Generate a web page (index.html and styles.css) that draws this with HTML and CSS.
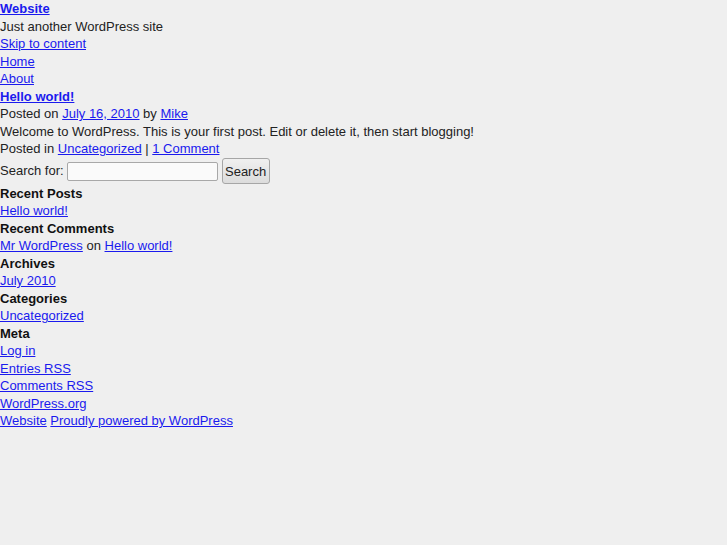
FILE: index.html
```html
<!DOCTYPE html>
<html lang="en">
<head>
    <meta charset="UTF-8">
    <title>Website | Just another WordPress site</title>
    <link rel="stylesheet" href="styles.css">
</head>
<body>
    <div id="wrapper">
        <div id="header">
            <h1 class="site-title"><a href="#">Website</a></h1>
            <div class="site-description">Just another WordPress site</div>
            <div class="skip-link"><a href="#content">Skip to content</a></div>
            <ul class="menu">
                <li><a href="#">Home</a></li>
                <li><a href="#">About</a></li>
            </ul>
        </div>

        <div id="content">
            <div class="post">
                <h2 class="entry-title"><a href="#">Hello world!</a></h2>
                <div class="entry-meta">Posted on <a href="#">July 16, 2010</a> by <a href="#">Mike</a></div>
                <div class="entry-content">Welcome to WordPress. This is your first post. Edit or delete it, then start blogging!</div>
                <div class="entry-utility">Posted in <a href="#">Uncategorized</a> | <a href="#">1 Comment</a></div>
            </div>
        </div>

        <div id="sidebar">
            <form class="searchform">
                <label for="s">Search for:</label>
                <input type="text" id="s">
                <button type="button">Search</button>
            </form>

            <h3 class="widget-title">Recent Posts</h3>
            <ul>
                <li><a href="#">Hello world!</a></li>
            </ul>

            <h3 class="widget-title">Recent Comments</h3>
            <ul>
                <li><a href="#">Mr WordPress</a> on <a href="#">Hello world!</a></li>
            </ul>

            <h3 class="widget-title">Archives</h3>
            <ul>
                <li><a href="#">July 2010</a></li>
            </ul>

            <h3 class="widget-title">Categories</h3>
            <ul>
                <li><a href="#">Uncategorized</a></li>
            </ul>

            <h3 class="widget-title">Meta</h3>
            <ul>
                <li><a href="#">Log in</a></li>
                <li><a href="#">Entries RSS</a></li>
                <li><a href="#">Comments RSS</a></li>
                <li><a href="#">WordPress.org</a></li>
            </ul>
        </div>

        <div id="footer">
            <a href="#">Website</a> <a href="#">Proudly powered by WordPress</a>
        </div>
    </div>
</body>
</html>
```

FILE: styles.css
```css
html, body, div, h1, h2, h3, ul, li, form, label {
    margin: 0;
    padding: 0;
    font-size: 100%;
    font-weight: normal;
}

body {
    font-family: 'Liberation Sans', Arial, sans-serif;
    font-size: 13px;
    line-height: 17.5px;
    background: #efefef;
    color: #222;
}

a {
    color: #1a1aee;
}

ul {
    list-style: none;
}

h1, h2, h3 {
    font-weight: bold;
}

h3 {
    color: #111;
}

.searchform {
    display: flex;
    align-items: center;
    height: 27px;
}

.searchform input {
    width: 145px;
    height: 15px;
    margin-left: 3px;
    padding: 1px 2px;
    border: 1px solid #a8a8a8;
    border-radius: 2px;
    background: #fafafa;
    font: inherit;
}

.searchform button {
    width: 48px;
    height: 26px;
    margin-left: 4px;
    padding: 0;
    border: 1px solid #a6a6a6;
    border-radius: 3px;
    background: linear-gradient(#f0f0f0, #dcdcdc);
    color: #222;
    font-family: 'Liberation Sans', Arial, sans-serif;
    font-size: 13px;
}
```
